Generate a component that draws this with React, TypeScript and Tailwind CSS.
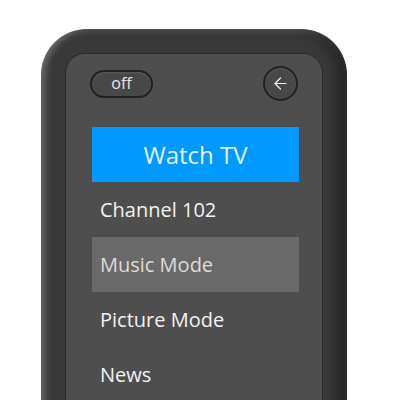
import { ArrowLeft } from 'lucide-react';

const items = [
    { label: 'Channel 102', active: false },
    { label: 'Music Mode', active: true },
    { label: 'Picture Mode', active: false },
    { label: 'News', active: false },
];

export default function App() {
    return (
        <div className="w-[400px] h-[400px] overflow-hidden bg-white pt-[29px] pl-[41px]" style={{ fontFamily: '"Open Sans", "Noto Sans", sans-serif' }}>
            <div className="w-[306px] h-[420px] rounded-t-[46px] bg-[#383838] px-[24px] pt-[24px] shadow-[inset_5px_0_6px_rgba(255,255,255,0.2),inset_-10px_0_12px_rgba(0,0,0,0.35),inset_0_5px_6px_rgba(255,255,255,0.08)]">
                <div className="h-full rounded-t-[20px] border border-[#2a2a2a] bg-[#4e4e4e] px-[24px] pt-[12px]">
                    <div className="flex items-center justify-between">
                        <button className="h-[28px] w-[63px] rounded-full border-2 border-[#222] bg-[#484848] text-[16px] text-[#e6e6e6] shadow-[inset_0_1px_2px_rgba(255,255,255,0.12)] leading-none pb-[2px]">off</button>
                        <button className="flex h-[35px] w-[35px] items-center justify-center rounded-full border-2 border-[#222] bg-[#484848] text-[#eeeeee] shadow-[inset_0_1px_2px_rgba(255,255,255,0.12)]">
                            <ArrowLeft size={19} strokeWidth={1.5} />
                        </button>
                    </div>
                    <div className="ml-[2px] mt-[26px] flex w-[207px] flex-col">
                        <div className="flex h-[55px] items-center justify-center bg-[#0099ff] text-[24px] text-[#e4f4ff]">Watch TV</div>
                        {items.map((it) => (
                            <div key={it.label} className={`flex h-[55px] items-center px-[8px] text-[20px] ${it.active ? 'bg-[#6a6a6a] text-[#dcdcdc]' : 'text-[#f2f2f2]'}`}>{it.label}</div>
                        ))}
                    </div>
                </div>
            </div>
        </div>
    );
}
